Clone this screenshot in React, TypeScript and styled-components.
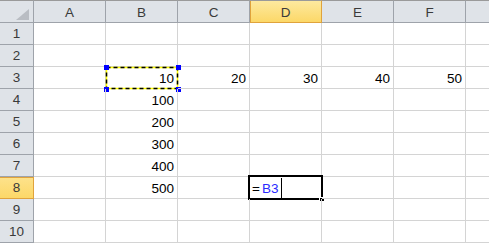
import React from "react";
import styled, { createGlobalStyle, css } from "styled-components";

const Global = createGlobalStyle`
  html, body { margin: 0; padding: 0; background: #ffffff; overflow: hidden; }
  body { font-family: "Liberation Sans", Arial, sans-serif; }
`;

const COLS = ["A", "B", "C", "D", "E", "F", "G"];
const ROWS = 10;

const Sheet = styled.div`
  display: grid;
  grid-template-columns: 34px repeat(6, 72px) 23px;
  grid-template-rows: 23px repeat(${ROWS}, 22px);
  width: 489px;
  height: 243px;
  overflow: hidden;
  font-family: "Liberation Sans", Arial, sans-serif;
  font-size: 13.5px;
`;

const headerBase = css`
  box-sizing: border-box;
  background: #dfe3e8;
  color: #3a3a3a;
  border-right: 1px solid #9ea3aa;
  border-bottom: 1px solid #9ea3aa;
  display: flex;
  align-items: center;
  justify-content: center;
`;

const Corner = styled.div`
  ${headerBase};
  border-top: 1px solid #9a9a9a;
  position: relative;
`;

const CornerTriangle = styled.svg`
  position: absolute;
  left: 16px;
  top: 8px;
`;

const ColHeader = styled.div<{ $active?: boolean; $last?: boolean }>`
  ${headerBase};
  border-top: 1px solid #9a9a9a;
  padding-top: 1px;
  ${(p) => p.$last && css`border-right: none;`}
  ${(p) =>
    p.$active &&
    css`
      background: linear-gradient(#fde99f, #fcd868);
      border-right: 1px solid #e0a33c;
      border-bottom: 1px solid #e0a33c;
      border-top: 1px solid #9a9a9a;
      box-shadow: inset 1px 0 0 #e0a33c;
    `}
`;

const RowHeader = styled.div<{ $active?: boolean }>`
  ${headerBase};
  ${(p) =>
    p.$active &&
    css`
      background: linear-gradient(#fde28c, #fcd868);
      border-right: 1px solid #e0a33c;
      border-bottom: 1px solid #e0a33c;
      box-shadow: inset 0 1px 0 #e0a33c;
    `}
`;

const Cell = styled.div<{ $last?: boolean }>`
  box-sizing: border-box;
  position: relative;
  border-right: 1px solid #d4d4d4;
  border-bottom: 1px solid #d4d4d4;
  display: flex;
  align-items: center;
  justify-content: flex-end;
  padding: 2px 3px 0 0;
  color: #000;
  ${(p) => p.$last && css`border-right: none;`}
`;

const Marquee = styled.svg`
  position: absolute;
  left: -3px;
  top: -3px;
  overflow: visible;
`;

const ActiveBox = styled.div`
  position: absolute;
  left: -2px;
  top: -2px;
  width: 75px;
  height: 25px;
  box-sizing: border-box;
  border: 2px solid #000;
  display: flex;
  align-items: center;
  padding: 1px 0 0 2px;
  background: #fff;
`;

const FillHandle = styled.div`
  position: absolute;
  right: -3px;
  bottom: -3px;
  width: 4px;
  height: 3px;
  background: #000;
  border-left: 1px solid #fff;
  border-top: 1px solid #fff;
`;

const Eq = styled.span`
  color: #000;
`;

const Ref = styled.span`
  color: #2a2aff;
  margin-left: 2px;
`;

const Caret = styled.span`
  display: inline-block;
  width: 1px;
  height: 20px;
  background: #000;
  margin-left: 3px;
`;

const values: Record<string, string> = {
  B3: "10",
  C3: "20",
  D3: "30",
  E3: "40",
  F3: "50",
  B4: "100",
  B5: "200",
  B6: "300",
  B7: "400",
  B8: "500",
};

function MarqueeBox() {
  const w = 72;
  const h = 22;
  const o = 3;
  const handles = [
    [o, o],
    [o + w, o],
    [o, o + h],
    [o + w, o + h],
  ];
  return (
    <Marquee width={w + 6} height={h + 6}>
      <rect x={o + 0.5} y={o + 0.5} width={w - 1} height={h - 1} fill="none" stroke="#ffff00" strokeWidth={1.5} />
      <rect
        x={o + 0.5}
        y={o + 0.5}
        width={w - 1}
        height={h - 1}
        fill="none"
        stroke="#000"
        strokeWidth={1.5}
        strokeDasharray="4 3"
      />
      {handles.map(([x, y], i) => (
        <rect key={i} x={x - 2} y={y - 2} width={5} height={5} fill="#0000ff" />
      ))}
    </Marquee>
  );
}

export default function App() {
  const cells: React.ReactNode[] = [];
  cells.push(
    <Corner key="corner">
      <CornerTriangle width="13" height="11" viewBox="0 0 13 11">
        <polygon points="13,0 13,11 0,11" fill="#b9bdc3" />
      </CornerTriangle>
    </Corner>
  );
  COLS.forEach((c, i) =>
    cells.push(
      <ColHeader key={`h${c}`} $active={c === "D"} $last={i === COLS.length - 1}>
        {c === "G" ? "" : c}
      </ColHeader>
    )
  );
  for (let r = 1; r <= ROWS; r++) {
    cells.push(
      <RowHeader key={`r${r}`} $active={r === 8}>
        {r}
      </RowHeader>
    );
    COLS.forEach((c, i) => {
      const id = `${c}${r}`;
      cells.push(
        <Cell key={id} $last={i === COLS.length - 1}>
          {values[id]}
          {id === "B3" && <MarqueeBox />}
          {id === "D8" && (
            <ActiveBox>
              <Eq>=</Eq>
              <Ref>B3</Ref>
              <Caret />
              <FillHandle />
            </ActiveBox>
          )}
        </Cell>
      );
    });
  }
  return (
    <>
      <Global />
      <Sheet>{cells}</Sheet>
    </>
  );
}
